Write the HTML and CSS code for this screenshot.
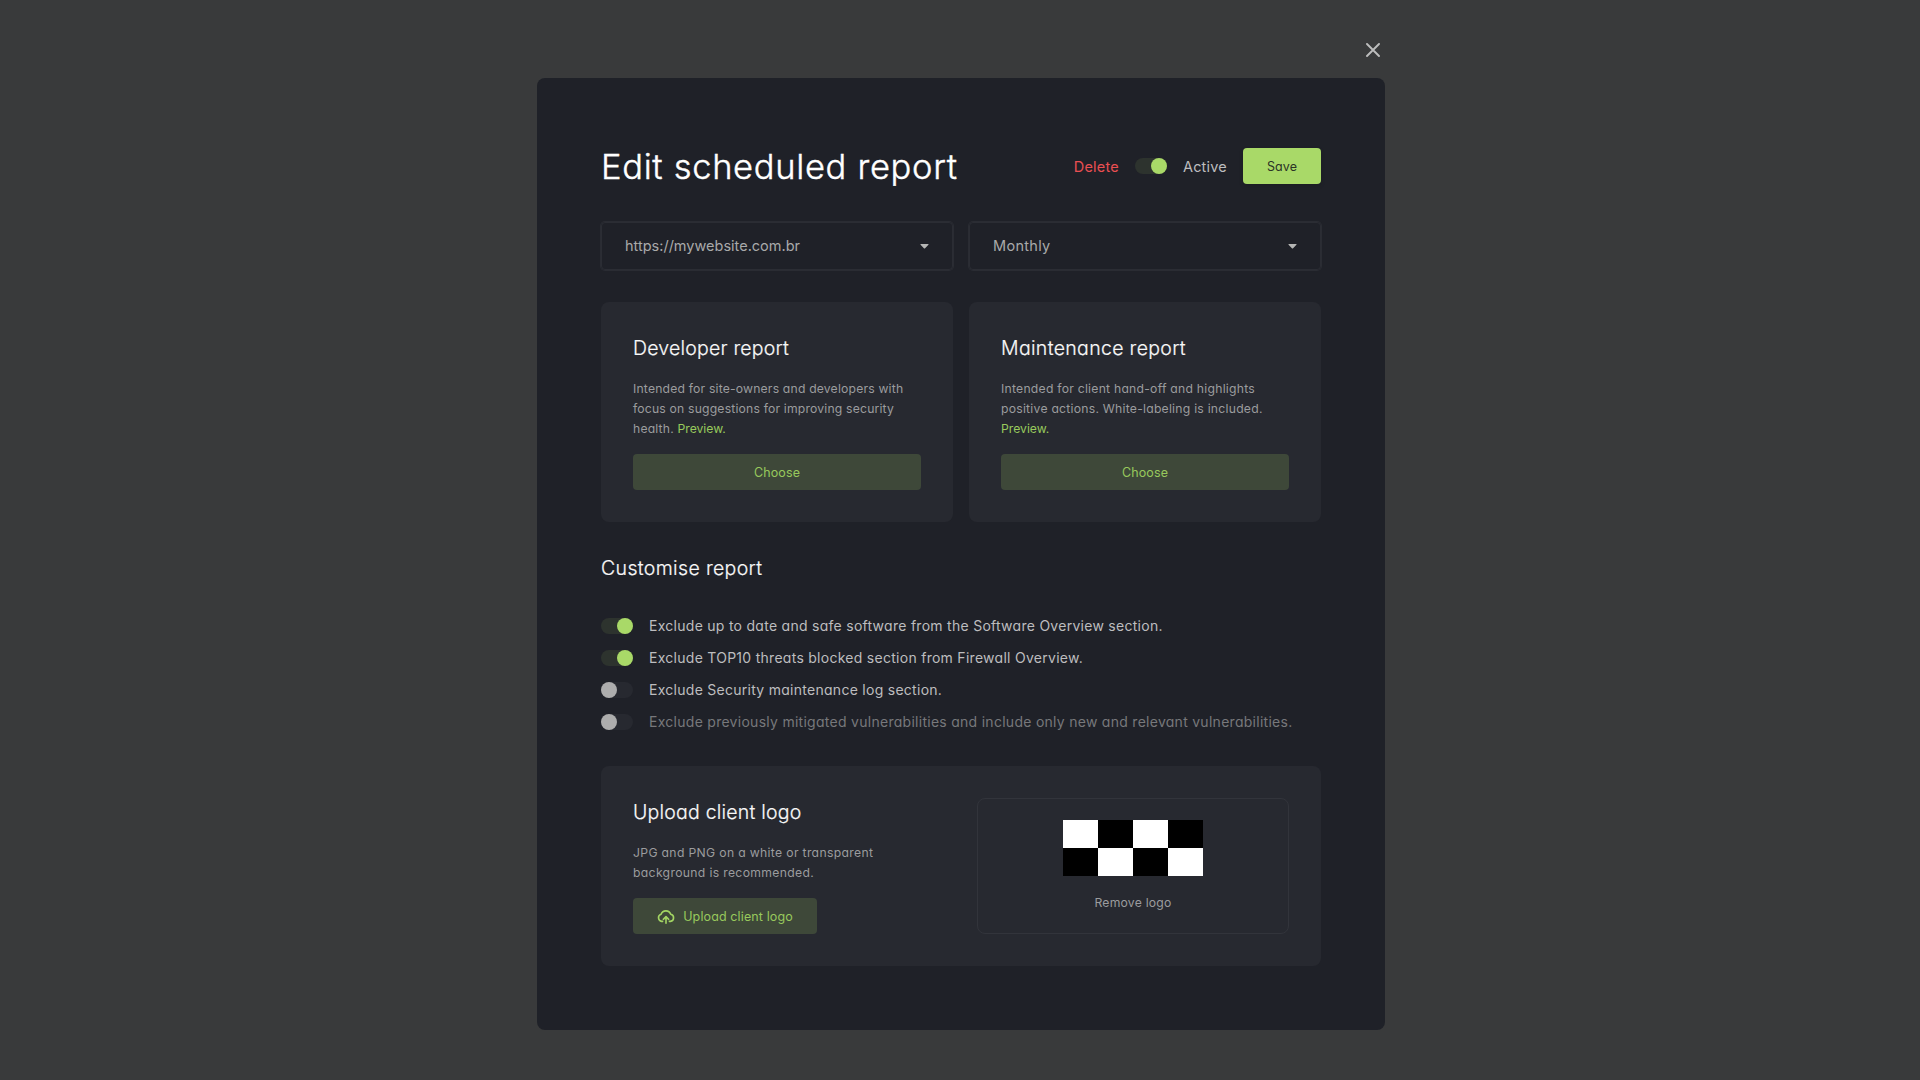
FILE: index.html
```html
<!DOCTYPE html>
<html lang="en">
<head>
<meta charset="utf-8">
<title>Edit scheduled report</title>
<link rel="stylesheet" href="styles.css">
</head>
<body>
<div class="overlay">
  <button class="close" aria-label="Close">
    <svg width="14" height="14" viewBox="0 0 14 14"><path d="M1 1l12 12M13 1L1 13" stroke="#bdbdbd" stroke-width="1.9" stroke-linecap="round"/></svg>
  </button>
  <main class="modal">
    <header class="header">
      <h1 class="title">Edit scheduled report</h1>
      <div class="actions">
        <a class="delete">Delete</a>
        <span class="toggle on"></span>
        <span>Active</span>
        <button class="btn save">Save</button>
      </div>
    </header>

    <div class="grid selects">
      <div class="select"><span class="url">https://mywebsite.com.br</span><svg width="9" height="5" viewBox="0 0 9 5"><path d="M0.9 0h7.2a.5.5 0 0 1 .35.85L5.1 4.3a.85.85 0 0 1-1.2 0L.55.85A.5.5 0 0 1 .9 0z" fill="#b5b6b5"/></svg></div>
      <div class="select"><span>Monthly</span><svg width="9" height="5" viewBox="0 0 9 5"><path d="M0.9 0h7.2a.5.5 0 0 1 .35.85L5.1 4.3a.85.85 0 0 1-1.2 0L.55.85A.5.5 0 0 1 .9 0z" fill="#b5b6b5"/></svg></div>
    </div>

    <div class="grid">
      <section class="card developer">
        <h2 class="heading">Developer report</h2>
        <p class="desc">Intended for site-owners and developers with<br>focus on suggestions for improving security<br>health. <a class="link">Preview.</a></p>
        <button class="btn soft wide">Choose</button>
      </section>
      <section class="card maintenance">
        <h2 class="heading">Maintenance report</h2>
        <p class="desc">Intended for client hand-off and highlights<br>positive actions. White-labeling is included.<br><a class="link">Preview.</a></p>
        <button class="btn soft wide">Choose</button>
      </section>
    </div>

    <h2 class="heading customise">Customise report</h2>
    <ul class="options">
      <li class="option"><span class="toggle on"></span><span>Exclude up to date and safe software from the Software Overview section.</span></li>
      <li class="option"><span class="toggle on"></span><span>Exclude TOP10 threats blocked section from Firewall Overview.</span></li>
      <li class="option"><span class="toggle"></span><span>Exclude Security maintenance log section.</span></li>
      <li class="option muted"><span class="toggle"></span><span>Exclude previously mitigated vulnerabilities and include only new and relevant vulnerabilities.</span></li>
    </ul>

    <section class="card upload">
      <div>
        <h2 class="heading">Upload client logo</h2>
        <p class="desc">JPG and PNG on a white or transparent<br>background is recommended.</p>
        <button class="btn soft upload-btn">
          <svg width="18" height="14" viewBox="0 0 18 14" fill="none" stroke="#a3d563" stroke-width="1.6" stroke-linecap="round" stroke-linejoin="round"><path d="M5.6 11.4H4.7A3.7 3.7 0 0 1 4.1 4.2A5.1 5.1 0 0 1 13.7 4.3A3.6 3.6 0 0 1 13.4 11.4H12.4"/><path d="M9 13.2V6.9M6.3 9.3L9 6.7l2.7 2.6"/></svg>
          <span>Upload client logo</span>
        </button>
      </div>
      <div class="preview">
        <svg width="140" height="56" viewBox="0 0 140 56" shape-rendering="crispEdges"><path fill="#fff" d="M0 0h140v56H0z"/><path fill="#000" d="M35 0h35v28H35zM105 0h35v28h-35zM0 28h35v28H0zM70 28h35v28H70z"/></svg>
        <a class="remove">Remove logo</a>
      </div>
    </section>
  </main>
</div>
</body>
</html>
```
FILE: styles.css
```css
* { box-sizing: border-box; }

body {
  margin: 0;
  background: #393a3b;
  color: #bdbdbf;
  font-family: Inter, "Liberation Sans", sans-serif;
  font-weight: 400;
  font-feature-settings: "cv11";
}

h1, h2, p, ul { margin: 0; padding: 0; }

button {
  border: 0;
  background: none;
  padding: 0;
  color: inherit;
  font: inherit;
  font-feature-settings: inherit;
}

.overlay {
  width: 848px;
  height: 1080px;
  margin-left: 537px;
  padding-top: 43px;
  display: flex;
  flex-direction: column;
  align-items: flex-end;
}

.close { display: flex; margin: 0 5px 21px 0; height: 14px; }

.modal {
  width: 848px;
  height: 952px;
  padding: 64px;
  border-radius: 8px;
  background: #1f2128;
}

.header {
  height: 48px;
  display: flex;
  align-items: center;
  justify-content: space-between;
}

.title {
  padding-top: 2px;
  color: #fff;
  font-size: 34.5px;
  font-weight: 300;
  line-height: 48px;
  letter-spacing: 0.67px;
  -webkit-text-stroke: 0.4px #fff;
}

.actions {
  display: flex;
  align-items: center;
  gap: 16px;
  font-size: 14.5px;
  letter-spacing: 0.2px;
}

.delete { color: #ea4f52; }

.toggle {
  flex: none;
  width: 32px;
  height: 16px;
  border-radius: 8px;
  background: #272930;
  display: flex;
}

.toggle::before {
  content: "";
  width: 16px;
  height: 16px;
  border-radius: 50%;
  background: #adadad;
}

.toggle.on { background: #2d332e; justify-content: flex-end; }
.toggle.on::before { background: #a9d968; }

.btn {
  height: 36px;
  padding-top: 1px;
  border-radius: 4px;
  display: flex;
  align-items: center;
  justify-content: center;
  font-size: 12.5px;
  letter-spacing: 0.12px;
}

.save {
  width: 78px;
  background: #a9d968;
  color: #2b3326;
  box-shadow: 0 2px 4px rgba(0, 0, 0, 0.15);
}

.soft { background: #3e4839; color: #98c95c; }
.wide { width: 100%; }

.grid {
  display: grid;
  grid-template-columns: 1fr 1fr;
  gap: 16px;
}

.selects { margin: 32px 0; }

.select {
  height: 48px;
  padding: 0 23px;
  border: 1px solid #2b2d34;
  border-radius: 4px;
  box-shadow: 0 0 0 1px #2a2c33;
  display: flex;
  align-items: center;
  justify-content: space-between;
  color: #a9aaaa;
  font-size: 14.5px;
  line-height: 18px;
  letter-spacing: 0.3px;
}

.url { letter-spacing: 0; }

.card {
  padding: 32px;
  border-radius: 8px;
  background: #272930;
}

.heading {
  color: #f8f8f8;
  font-size: 19.5px;
  font-weight: 300;
  line-height: 28px;
  letter-spacing: 0.21px;
  -webkit-text-stroke: 0.2px #f8f8f8;
}

.maintenance .heading { letter-spacing: 0.33px; }

.desc {
  padding-top: 1px;
  margin: 16px 0 15px;
  color: #9b9c9e;
  font-size: 12.2px;
  line-height: 20px;
  letter-spacing: 0.18px;
  white-space: nowrap;
}

.maintenance .desc { letter-spacing: 0.24px; }
.upload .desc { letter-spacing: 0.33px; }

.link { color: #98c95c; letter-spacing: 0; }

.customise { margin: 32px 0 36px; letter-spacing: 0.35px; }

.options {
  list-style: none;
  display: grid;
  gap: 16px;
  margin-bottom: 36px;
}

.option {
  height: 16px;
  display: flex;
  align-items: center;
  gap: 16px;
  font-size: 14px;
  line-height: 16px;
  letter-spacing: 0.275px;
  white-space: nowrap;
}

.muted { color: #77787b; }

.upload { display: flex; justify-content: space-between; }

.upload-btn { width: 184px; gap: 8px; }

.preview {
  width: 312px;
  height: 136px;
  padding-top: 21px;
  border: 1px solid #32343b;
  border-radius: 8px;
  display: flex;
  flex-direction: column;
  align-items: center;
  gap: 17px;
}

.remove {
  color: #9b9c9e;
  font-size: 12.2px;
  line-height: 20px;
  letter-spacing: 0.22px;
}
```
